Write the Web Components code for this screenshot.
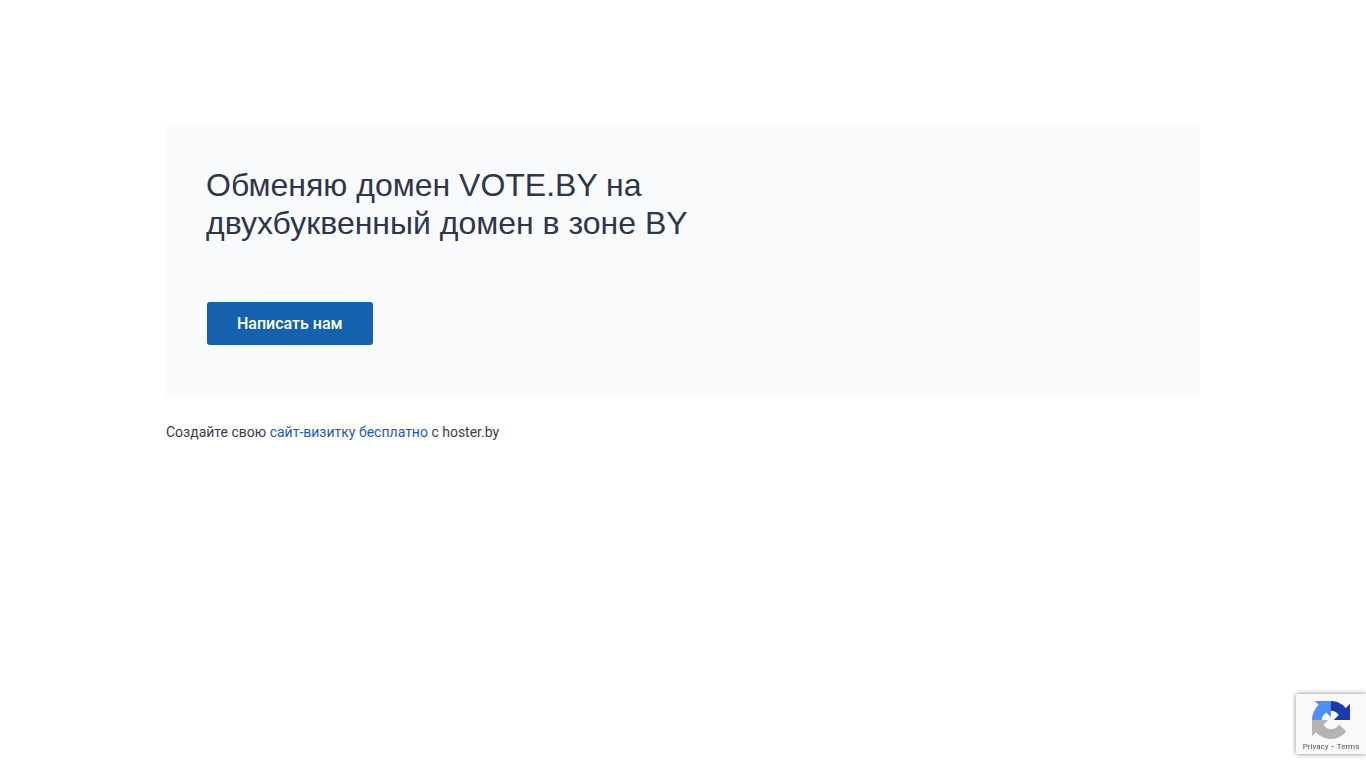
<!DOCTYPE html>
<html lang="ru">
<head>
<meta charset="utf-8">
<meta name="viewport" content="width=device-width, initial-scale=1">
<title>VOTE.BY</title>
<style>
    body {
        margin: 0;
        background: #fff;
        color: #3b3e47;
        font-family: Roboto, 'Noto Sans', sans-serif;
        font-size: 14px;
        line-height: 20px;
    }
</style>
</head>
<body>
<landing-page>
    <offer-card action="Написать нам">Обменяю домен VOTE.BY на двухбуквенный домен в зоне BY</offer-card>
    <site-credit slot="footer"></site-credit>
</landing-page>
<captcha-badge></captcha-badge>

<script>
class LandingPage extends HTMLElement {
    constructor() {
        super();
        this.attachShadow({ mode: 'open' }).innerHTML = `
            <style>
                :host {
                    display: block;
                    padding: 125px 16px 40px;
                }
                .container {
                    display: flex;
                    flex-direction: column;
                    gap: 26px;
                    max-width: 1034px;
                    margin: 0 auto;
                }
            </style>
            <div class="container">
                <main><slot></slot></main>
                <footer><slot name="footer"></slot></footer>
            </div>
        `;
    }
}

class OfferCard extends HTMLElement {
    constructor() {
        super();
        this.attachShadow({ mode: 'open' });
    }

    connectedCallback() {
        this.shadowRoot.innerHTML = `
            <style>
                :host {
                    display: block;
                    padding: 41px 40px 51px;
                    background: #f9fafc;
                }
                h1 {
                    max-width: 500px;
                    margin: 0 0 60px;
                    color: #2f364a;
                    font: 400 32px/38px 'Liberation Sans', Arial, sans-serif;
                }
                button {
                    display: block;
                    margin: 0 1px;
                    padding: 12px 30px;
                    border: 0;
                    border-radius: 3px;
                    background: #1661ae;
                    color: #fff;
                    font: 500 16px/19px Roboto, 'Noto Sans', sans-serif;
                    cursor: pointer;
                }
                button:hover {
                    background: #12508f;
                }
            </style>
            <h1><slot></slot></h1>
            <button type="button">${this.getAttribute('action')}</button>
        `;
    }
}

class SiteCredit extends HTMLElement {
    constructor() {
        super();
        this.attachShadow({ mode: 'open' }).innerHTML = `
            <style>
                :host {
                    display: block;
                }
                p {
                    margin: 0;
                }
                a {
                    color: #1c5bb0;
                    text-decoration: none;
                }
                a:hover {
                    text-decoration: underline;
                }
            </style>
            <p>Создайте свою <a href="#">сайт-визитку бесплатно</a> с hoster.by</p>
        `;
    }
}

class CaptchaBadge extends HTMLElement {
    constructor() {
        super();
        this.attachShadow({ mode: 'open' }).innerHTML = `
            <style>
                /* sits over the page, in the bottom right corner */
                :host {
                    position: fixed;
                    right: 0;
                    bottom: 14px;
                    display: flex;
                    flex-direction: column;
                    align-items: center;
                    box-sizing: border-box;
                    width: 70px;
                    height: 60px;
                    padding-top: 7px;
                    gap: 3px;
                    border-radius: 2px 0 0 2px;
                    background: #f9f9f9;
                    box-shadow: 0 0 5px gray;
                    color: #555;
                    font: 8px/10px Roboto, sans-serif;
                }
                svg {
                    width: 38px;
                    height: 38px;
                }
                a {
                    color: inherit;
                    text-decoration: none;
                }
                nav {
                    display: flex;
                    gap: 3px;
                    white-space: nowrap;
                }
                span {
                    color: #000;
                }
            </style>
            <svg viewBox="0 0 64 64" aria-hidden="true">
                <path fill="#1c3aa9" d="M64 31.955l-.033-1.37V4.687l-7.16 7.16C50.948 4.674 42.033.093 32.05.093c-10.4 0-19.622 4.96-25.458 12.64l11.736 11.86a15.55 15.55 0 0 1 4.754-5.334c2.05-1.6 4.952-2.906 8.968-2.906.485 0 .86.057 1.135.163 4.976.393 9.288 3.14 11.828 7.124l-8.307 8.307L64 31.953"/>
                <path fill="#4a90f5" d="M31.862.094l-1.37.033H4.594l7.16 7.16C4.58 13.147 0 22.06 0 32.046c0 10.4 4.96 19.622 12.64 25.458L24.5 45.768a15.55 15.55 0 0 1-5.334-4.754c-1.6-2.05-2.906-4.952-2.906-8.968 0-.485.057-.86.163-1.135.393-4.976 3.14-9.288 7.124-11.828l8.307 8.307L31.86.095"/>
                <path fill="#b3b3b3" d="M.001 32.045l.033 1.37v25.898l7.16-7.16c5.86 7.173 14.774 11.754 24.76 11.754 10.4 0 19.622-4.96 25.458-12.64l-11.736-11.86a15.55 15.55 0 0 1-4.754 5.334c-2.05 1.6-4.952 2.906-8.968 2.906-.485 0-.86-.057-1.135-.163-4.976-.393-9.288-3.14-11.828-7.124l8.307-8.307c-10.522.04-22.4.066-27.295-.005"/>
            </svg>
            <nav><a href="#">Privacy</a><span>-</span><a href="#">Terms</a></nav>
        `;
    }
}

customElements.define('landing-page', LandingPage);
customElements.define('offer-card', OfferCard);
customElements.define('site-credit', SiteCredit);
customElements.define('captcha-badge', CaptchaBadge);
</script>
</body>
</html>
